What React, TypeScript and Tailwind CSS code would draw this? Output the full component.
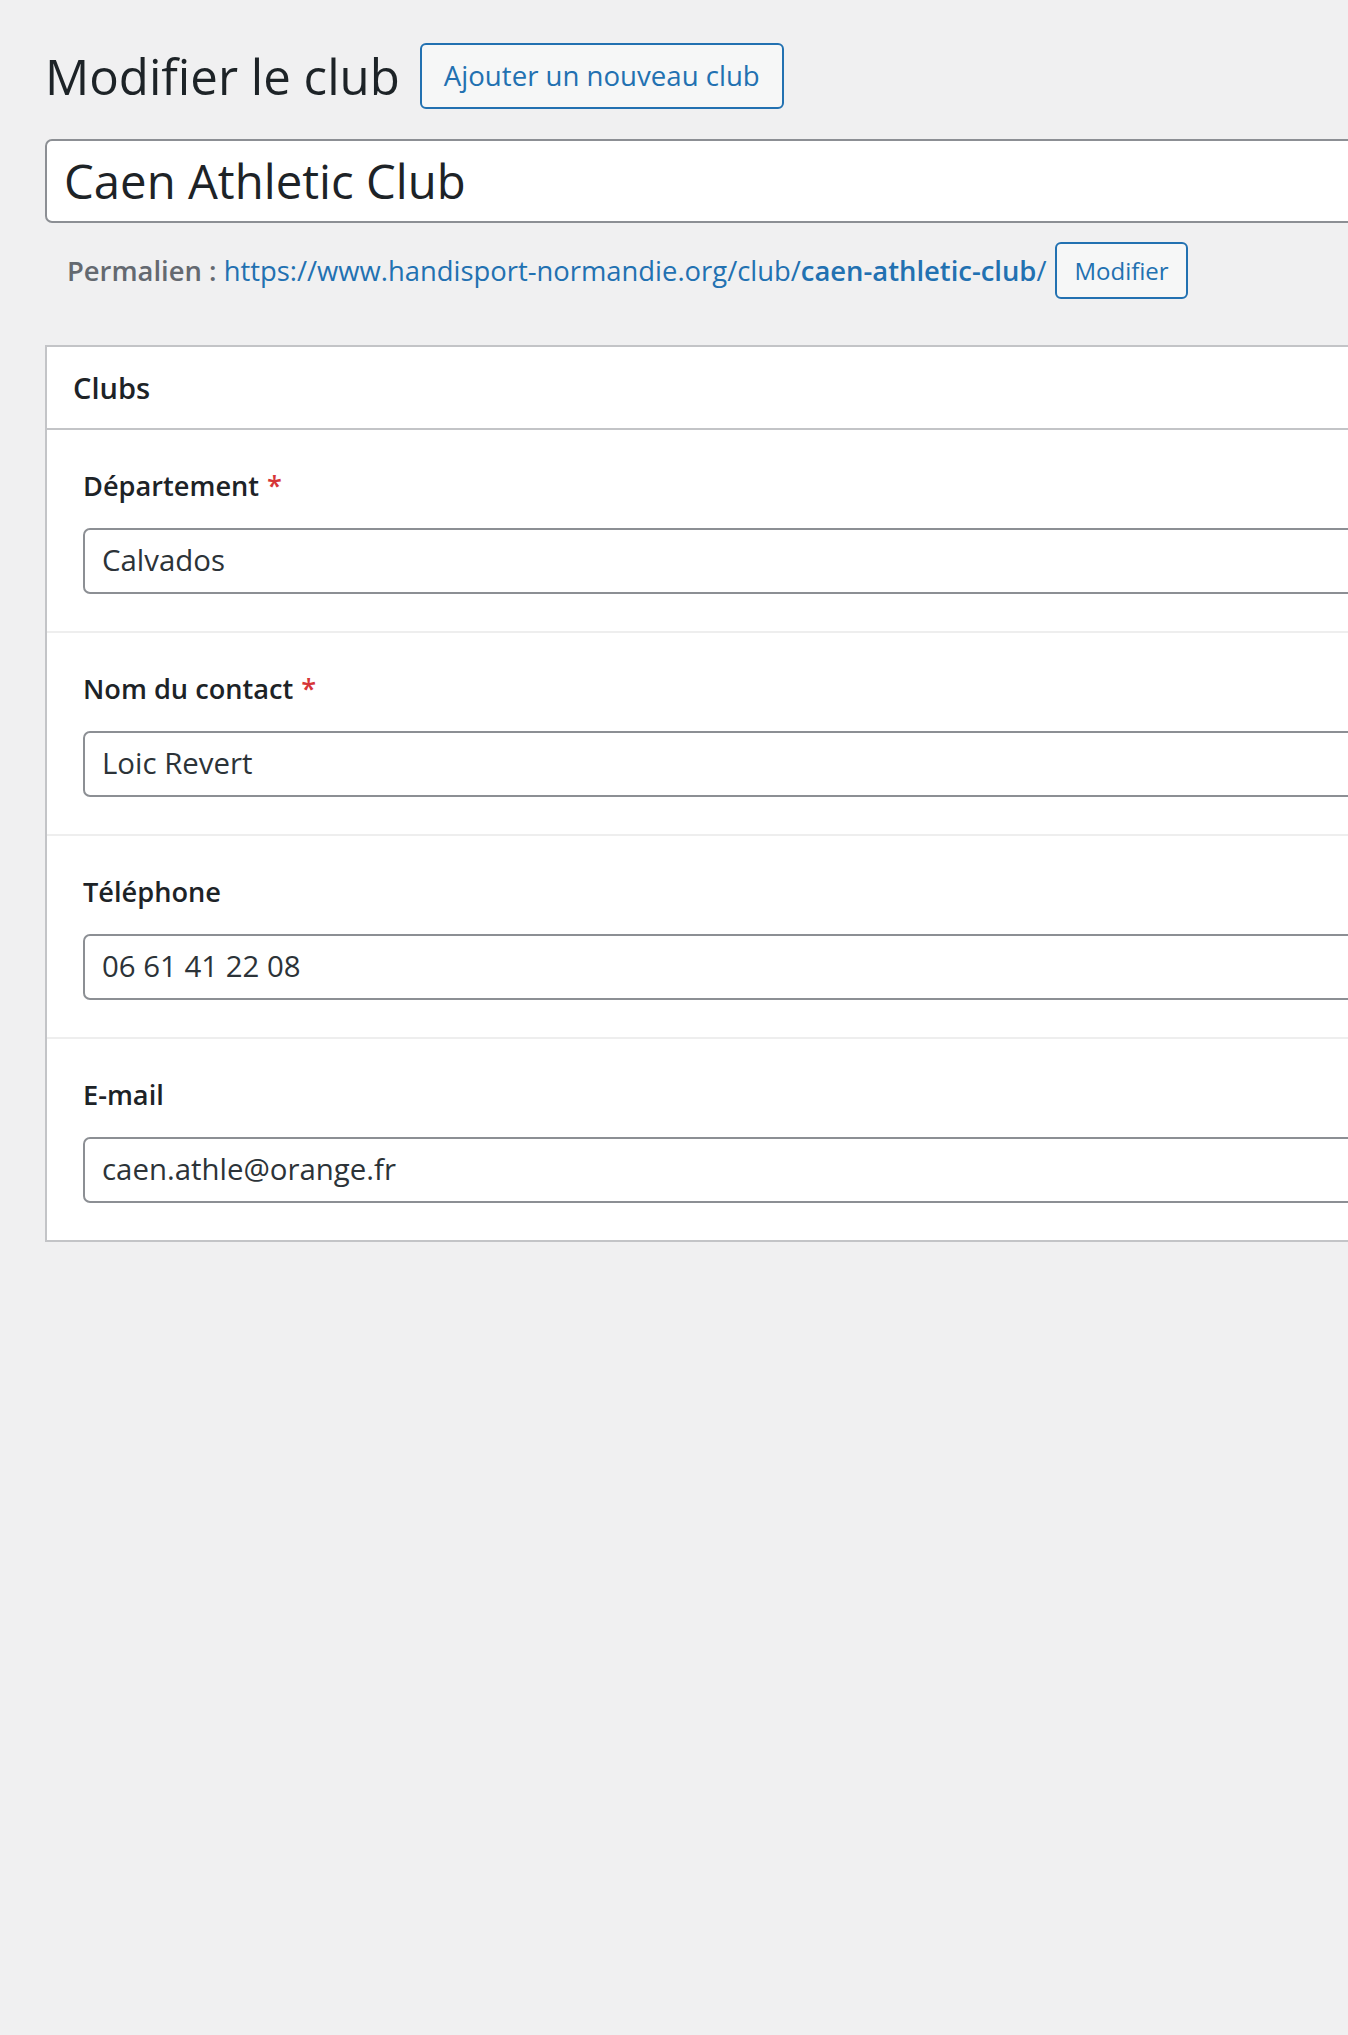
import React from "react";

const font = { fontFamily: '"Open Sans", "Noto Sans", Arial, sans-serif' };

function Field({ label, required, value, last }: { label: string; required?: boolean; value: string; last?: boolean }) {
  return (
    <div className={`pt-[36px] pb-[37px] pl-[36px] ${last ? "" : "border-b-2 border-[#eeeeee]"}`}>
      <div className="text-[27.2px] leading-[40px] font-semibold text-[#1d2327] mb-[22px]">
        {label}
        {required && <span className="text-[#d63638] ml-[8px]">*</span>}
      </div>
      <div className="h-[66px] border-2 border-[#8c8f94] rounded-[7px] bg-white flex items-center pl-[17px]">
        <span className="text-[29.4px] text-[#2c3338] leading-none">{value}</span>
      </div>
    </div>
  );
}

export default function App() {
  return (
    <div className="w-full min-h-[2035px] bg-[#f0f0f1] overflow-hidden" style={font}>
      <div className="pl-[45px] pt-[43px] w-[1405px]">
        <div className="flex items-center gap-[20px]">
          <h1 className="text-[49.2px] leading-[56px] font-normal text-[#1d2327]">Modifier le club</h1>
          <div className="h-[66px] px-[22px] border-2 border-[#2271b1] rounded-[6px] bg-[#f6f7f7] flex items-center">
            <span className="text-[27.6px] leading-none text-[#2271b1]">Ajouter un nouveau club</span>
          </div>
        </div>

        <div className="mt-[30px] h-[84px] border-2 border-[#8c8f94] rounded-[7px] bg-white flex items-center pl-[17px]">
          <span className="text-[47.3px] leading-none text-[#1d2327]">Caen Athletic Club</span>
        </div>

        <div className="mt-[19px] pl-[22px] flex items-center gap-[9px]">
          <div className="text-[27.4px] leading-[40px] whitespace-nowrap">
            <span className="font-semibold text-[#646970]">Permalien : </span>
            <span className="text-[#2271b1]">
              https://www.handisport-normandie.org/club/<span className="font-semibold">caen-athletic-club</span>/
            </span>
          </div>
          <div className="h-[57px] px-[17px] border-2 border-[#2271b1] rounded-[6px] bg-[#f6f7f7] flex items-center">
            <span className="text-[24px] leading-none text-[#2271b1]">Modifier</span>
          </div>
        </div>

        <div className="mt-[46px] bg-white border-2 border-[#c3c4c7]">
          <div className="h-[83px] border-b-2 border-[#c3c4c7] flex items-center pl-[26px]">
            <span className="text-[29px] leading-none font-semibold text-[#1d2327]">Clubs</span>
          </div>
          <Field label="Département" required value="Calvados" />
          <Field label="Nom du contact" required value="Loic Revert" />
          <Field label="Téléphone" value="06 61 41 22 08" />
          <Field label="E-mail" value="caen.athle@orange.fr" last />
        </div>
      </div>
    </div>
  );
}
